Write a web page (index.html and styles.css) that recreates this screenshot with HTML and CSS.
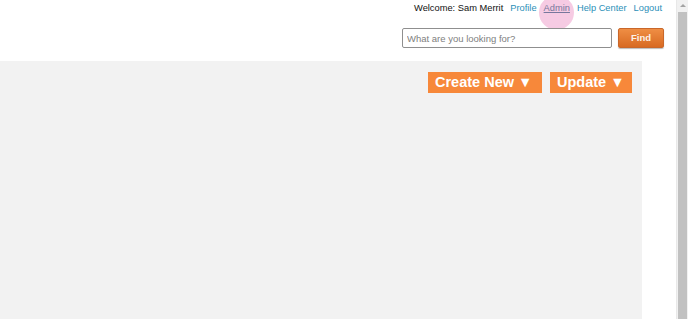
FILE: index.html
```html
<!DOCTYPE html>
<html>
<head lang="en">
    <meta charset="UTF-8">
    <title>Home</title>
    <link rel="stylesheet" href="styles.css">
</head>
<body>
<div class="page">
    <div class="header">
        <div class="user-links">
            <span class="welcome">Welcome: Sam Merrit</span>
            <a href="#">Profile</a>
            <a href="#" class="hover">Admin</a>
            <a href="#">Help Center</a>
            <a href="#">Logout</a>
        </div>
        <div class="search">
            <input type="text" class="search-box" placeholder="What are you looking for?">
            <a class="find-btn">Find</a>
        </div>
    </div>
    <div class="main">
        <div class="actions">
            <a class="action-btn create">Create New &#9660;</a>
            <a class="action-btn update">Update &#9660;</a>
        </div>
    </div>
</div>
<div class="scrollbar">
    <div class="arrow"></div>
    <div class="thumb"></div>
</div>
</body>
</html>
```

FILE: styles.css
```css
* {
    margin: 0;
    padding: 0;
    box-sizing: border-box;
}

html, body {
    height: 100%;
    overflow: hidden;
}

body {
    font-family: "Liberation Sans", Arial, sans-serif;
    background: #fff;
}

.page {
    width: 676px;
    height: 100%;
    display: flex;
    flex-direction: column;
}

.header {
    height: 61px;
    padding: 2px 12px 0 0;
}

.user-links {
    display: flex;
    justify-content: flex-end;
    gap: 7px;
    padding-right: 2px;
    font-size: 9.3px;
    line-height: 12px;
}

.welcome {
    color: #111;
}

.user-links a {
    color: #2b8fb8;
    text-decoration: none;
    position: relative;
}

.user-links a.hover {
    color: #77779c;
    text-decoration: underline;
}

.user-links a.hover::before {
    content: "";
    position: absolute;
    left: -5px;
    top: -7px;
    width: 35px;
    height: 35px;
    border-radius: 50%;
    background: rgba(238, 160, 204, 0.55);
    z-index: -1;
}

.search {
    display: flex;
    justify-content: flex-end;
    gap: 6px;
    margin-top: 14px;
}

.search-box {
    width: 210px;
    height: 20px;
    border: 1px solid #8f8f8f;
    border-radius: 2px;
    padding: 0 4px;
    font-family: "Liberation Sans", Arial, sans-serif;
    font-size: 9.5px;
    outline: none;
}

.search-box::placeholder {
    color: #808080;
}

.find-btn {
    display: inline-block;
    width: 46px;
    height: 20px;
    line-height: 18px;
    text-align: center;
    font-size: 9.5px;
    font-weight: bold;
    color: #fdf2e8;
    background: linear-gradient(#ef8e44, #d86a22);
    border: 1px solid #c9672a;
    border-radius: 2px;
    box-shadow: 0 1px 1px #bbb;
}

.main {
    flex: 1;
    width: 642px;
    background: #f2f2f2;
    padding: 11px 10px 0 0;
}

.actions {
    display: flex;
    justify-content: flex-end;
    gap: 8px;
}

.action-btn {
    display: inline-block;
    height: 21px;
    line-height: 21px;
    background: #f7883a;
    color: #fff;
    font-size: 14.5px;
    font-weight: bold;
    padding: 0 7px;
}

.create {
    width: 114px;
}

.update {
    width: 82px;
}

.scrollbar {
    position: fixed;
    top: 0;
    right: 0;
    width: 12px;
    height: 100%;
    background: #f1f1f1;
    border-left: 1px solid #e8e8e8;
}

.arrow {
    width: 0;
    height: 0;
    margin: 4px auto 0;
    border-left: 3px solid transparent;
    border-right: 3px solid transparent;
    border-bottom: 3px solid #a3a3a3;
}

.thumb {
    position: absolute;
    top: 12px;
    left: 1px;
    width: 9px;
    bottom: 0;
    background: #c1c1c1;
}
```
